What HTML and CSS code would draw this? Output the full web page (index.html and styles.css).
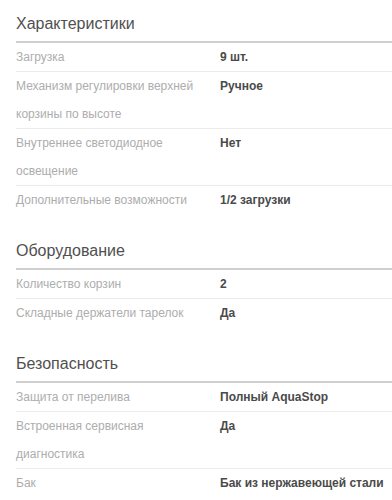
FILE: index.html
```html
<!DOCTYPE html>
<html lang="ru">
<head>
<meta charset="utf-8">
<link rel="stylesheet" href="styles.css">
</head>
<body>
<div class="specs">
  <section class="group">
    <h2 class="group-title">Характеристики</h2>
    <div class="row"><div class="label">Загрузка</div><div class="value">9 шт.</div></div>
    <div class="row"><div class="label">Механизм регулировки верхней корзины по высоте</div><div class="value">Ручное</div></div>
    <div class="row"><div class="label">Внутреннее светодиодное освещение</div><div class="value">Нет</div></div>
    <div class="row"><div class="label">Дополнительные возможности</div><div class="value">1/2 загрузки</div></div>
  </section>
  <section class="group">
    <h2 class="group-title">Оборудование</h2>
    <div class="row"><div class="label">Количество корзин</div><div class="value">2</div></div>
    <div class="row"><div class="label">Складные держатели тарелок</div><div class="value">Да</div></div>
  </section>
  <section class="group">
    <h2 class="group-title">Безопасность</h2>
    <div class="row"><div class="label">Защита от перелива</div><div class="value">Полный AquaStop</div></div>
    <div class="row"><div class="label">Встроенная сервисная диагностика</div><div class="value">Да</div></div>
    <div class="row"><div class="label">Бак</div><div class="value">Бак из нержавеющей стали</div></div>
  </section>
</div>
</body>
</html>
```
FILE: styles.css
```css
html, body {
  margin: 0;
  padding: 0;
  background: #fff;
}
body {
  font-family: "Liberation Sans", Arial, sans-serif;
  overflow: hidden;
}
.specs {
  padding: 0 0 0 16px;
  display: flex;
  flex-direction: column;
  gap: 13px;
}
.group {
  display: flex;
  flex-direction: column;
}
.group-title {
  margin: 0;
  padding: 12px 0 5px;
  font-size: 16px;
  line-height: 24px;
  font-weight: normal;
  color: #505050;
  border-bottom: 2px solid #d0d0d0;
}
.row {
  display: grid;
  grid-template-columns: 204px 1fr;
  font-size: 12px;
  line-height: 28px;
}
.row + .row {
  border-top: 1px solid #ececec;
}
.label {
  color: #adadad;
  padding-right: 8px;
}
.value {
  color: #4a4a4a;
  font-weight: bold;
  white-space: nowrap;
}
```
